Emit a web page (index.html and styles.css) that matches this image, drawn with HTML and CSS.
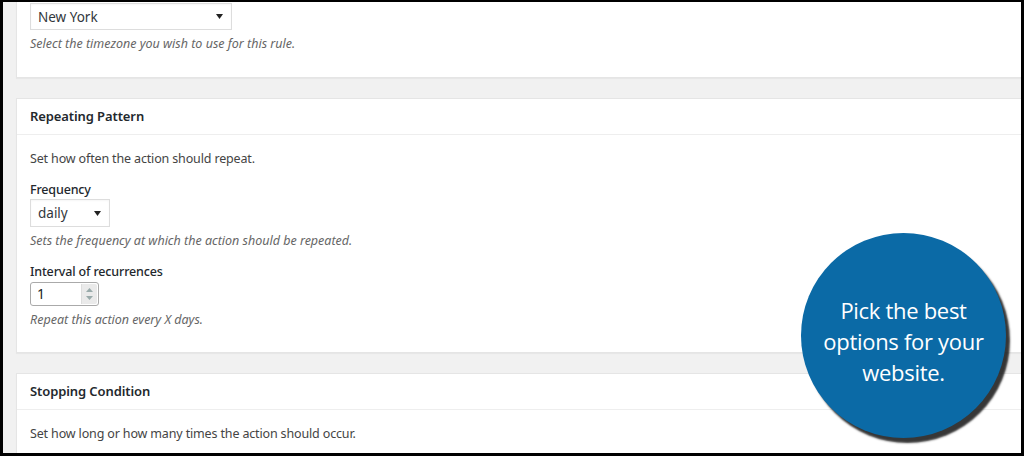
FILE: index.html
```html
<!DOCTYPE html>
<html>
<head>
<meta charset="utf-8">
<link rel="stylesheet" href="styles.css">
</head>
<body>
<div class="screen">
  <div class="card card-first">
    <div class="card-body first-body">
      <div class="select select-wide"><span>New York</span><svg class="caret" width="7" height="5" viewBox="0 0 7 5"><path d="M0 0H7L3.5 5Z" fill="#222"/></svg></div>
      <p class="desc">Select the timezone you wish to use for this rule.</p>
    </div>
  </div>

  <div class="card">
    <div class="card-head">Repeating Pattern</div>
    <div class="card-body">
      <p class="intro">Set how often the action should repeat.</p>
      <div class="label">Frequency</div>
      <div class="select select-small"><span>daily</span><svg class="caret" width="7" height="5" viewBox="0 0 7 5"><path d="M0 0H7L3.5 5Z" fill="#222"/></svg></div>
      <p class="desc">Sets the frequency at which the action should be repeated.</p>
      <div class="label">Interval of recurrences</div>
      <div class="number"><span class="num-val">1</span><span class="spin"><svg width="7" height="4" viewBox="0 0 7 4"><path d="M0 4L3.5 0L7 4Z" fill="#9aa"/></svg><svg width="7" height="4" viewBox="0 0 7 4"><path d="M0 0H7L3.5 4Z" fill="#9aa"/></svg></span></div>
      <p class="desc">Repeat this action every X days.</p>
    </div>
  </div>

  <div class="card">
    <div class="card-head">Stopping Condition</div>
    <div class="card-body">
      <p class="intro">Set how long or how many times the action should occur.</p>
    </div>
  </div>

  <div class="bubble"><p>Pick the best options for your website.</p></div>
</div>
</body>
</html>
```

FILE: styles.css
```css
html, body {
  margin: 0;
  padding: 0;
}
body {
  background: #000;
  padding: 2px 3px 3px 3px;
  font-family: "Noto Sans", "Open Sans", sans-serif;
  color: #444;
  font-size: 12.5px;
  letter-spacing: -0.15px;
}
.screen {
  position: relative;
  height: 451px;
  overflow: hidden;
  background: #f1f1f1;
  padding-left: 13px;
}
.card {
  width: 1020px;
  background: #fff;
  border: 1px solid #e5e5e5;
  box-shadow: 0 1px 1px rgba(0,0,0,0.04);
  margin-bottom: 20px;
}
.card-first {
  border-top: none;
  margin-bottom: 20px;
}
.card-head {
  height: 35px;
  line-height: 35px;
  padding-left: 13px;
  font-size: 13px;
  font-weight: 600;
  letter-spacing: -0.1px;
  color: #23282d;
  border-bottom: 1px solid #eee;
}
.card-body {
  padding: 0 12px 23px 13px;
}
.first-body {
  padding-top: 1px;
  padding-bottom: 24px;
}
p {
  margin: 0;
}
.intro {
  margin-top: 14px;
  line-height: 19px;
}
.label {
  margin-top: 12px;
  line-height: 19px;
  font-weight: 500;
  color: #23282d;
}
.select {
  display: flex;
  align-items: center;
  justify-content: space-between;
  box-sizing: border-box;
  border: 1px solid #ddd;
  background: #fff;
  font-size: 13.5px;
  letter-spacing: 0;
  color: #32373c;
  padding: 0 8px 0 7px;
  box-shadow: inset 0 1px 2px rgba(0,0,0,0.04);
}
.select-wide {
  width: 202px;
  height: 27px;
}
.select-small {
  width: 80px;
  height: 28px;
}
.desc {
  margin-top: 4px;
  line-height: 19px;
  font-style: italic;
  letter-spacing: 0;
  color: #666;
}
.number {
  margin-top: 1px;
  box-sizing: border-box;
  width: 69px;
  height: 24px;
  border: 1px solid #aaa;
  border-radius: 3px;
  display: flex;
  align-items: stretch;
  padding: 1px;
  background: #fff;
}
.num-val {
  flex: 1;
  padding-left: 5px;
  font-size: 14px;
  line-height: 20px;
  color: #222;
}
.spin {
  width: 15px;
  background: #eaeaea;
  border-left: 1px solid #ddd;
  border-radius: 0 2px 2px 0;
  display: flex;
  flex-direction: column;
  align-items: center;
  justify-content: space-around;
  padding: 2px 0;
}
.bubble {
  position: absolute;
  left: 798px;
  top: 231px;
  width: 205px;
  height: 205px;
  border-radius: 50%;
  background: #0b6aa6;
  box-shadow: 4px 5px 2px rgba(20,20,20,0.85);
  display: flex;
  align-items: center;
  justify-content: center;
}
.bubble p {
  width: 170px;
  padding-top: 12px;
  text-align: center;
  color: #fff;
  font-family: "Open Sans", sans-serif;
  font-size: 22px;
  line-height: 31px;
  letter-spacing: -0.3px;
}
```
